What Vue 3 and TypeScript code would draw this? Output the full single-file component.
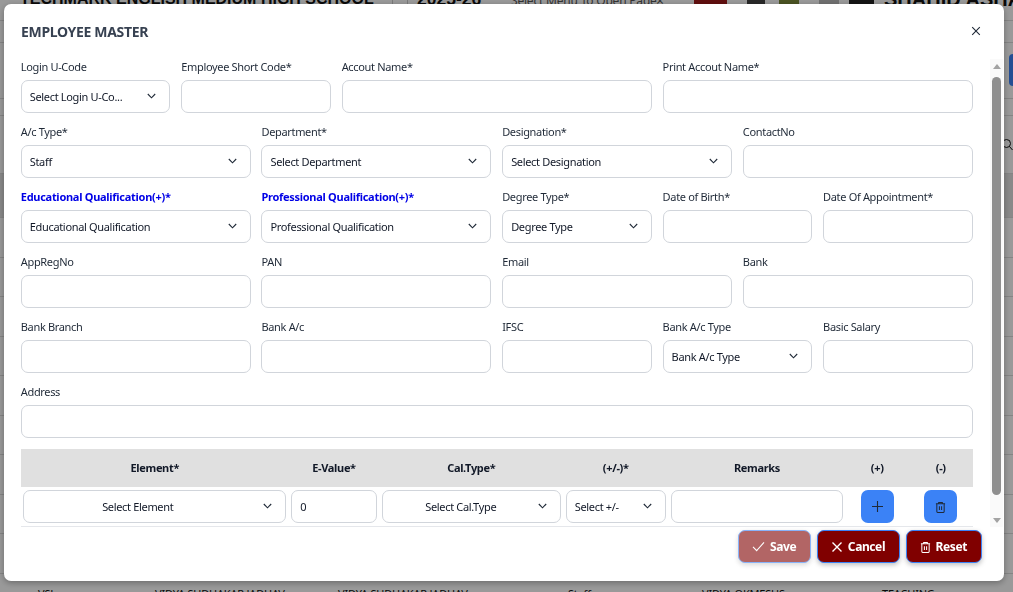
<script setup lang="ts">
interface Field {
  label: string;
  span: number;
  placeholder?: string;
  accent?: boolean;
}

const fields: Field[] = [
  { label: 'Login U-Code', span: 2, placeholder: 'Select Login U-Co...' },
  { label: 'Employee Short Code*', span: 2 },
  { label: 'Accout Name*', span: 4 },
  { label: 'Print Accout Name*', span: 4 },
  { label: 'A/c Type*', span: 3, placeholder: 'Staff' },
  { label: 'Department*', span: 3, placeholder: 'Select Department' },
  { label: 'Designation*', span: 3, placeholder: 'Select Designation' },
  { label: 'ContactNo', span: 3 },
  { label: 'Educational Qualification(+)*', span: 3, placeholder: 'Educational Qualification', accent: true },
  { label: 'Professional Qualification(+)*', span: 3, placeholder: 'Professional Qualification', accent: true },
  { label: 'Degree Type*', span: 2, placeholder: 'Degree Type' },
  { label: 'Date of Birth*', span: 2 },
  { label: 'Date Of Appointment*', span: 2 },
  { label: 'AppRegNo', span: 3 },
  { label: 'PAN', span: 3 },
  { label: 'Email', span: 3 },
  { label: 'Bank', span: 3 },
  { label: 'Bank Branch', span: 3 },
  { label: 'Bank A/c', span: 3 },
  { label: 'IFSC', span: 2 },
  { label: 'Bank A/c Type', span: 2, placeholder: 'Bank A/c Type' },
  { label: 'Basic Salary', span: 2 },
  { label: 'Address', span: 12 },
];

const columns = ['Element*', 'E-Value*', 'Cal.Type*', '(+/-)*', 'Remarks', '(+)', '(-)'];
const stripHeights = [10, 22, 56, 17, 58, 44, 39.5, 39.5, 39.5, 39.5, 39.5, 39.5, 39.5, 39.5, 39.5];
const lastRow = ['VSL', 'VIDYA SUDHAKAR JADHAV', 'VIDYA SUDHAKAR JADHAV', 'Staff', 'VIDYA OKMESUS', 'TEACHING'];
</script>

<template>
  <div class="page">
    <div class="topbar">
      <span class="school">TECHMARK ENGLISH MEDIUM HIGH SCHOOL</span>
      <span class="year">2025-26</span>
      <span class="menu">Select Menu To Open Page</span>
      <span class="menu-x">×</span>
      <span class="red-tile"></span>
      <span class="tool dark"></span>
      <span class="tool green"></span>
      <span class="tool grey"></span>
      <span class="tool black"></span>
      <span class="user">SHAHID ASHA(</span>
    </div>
    <div
      v-for="(h, i) in stripHeights"
      :key="i"
      class="strip"
      :class="{ band: i === 5 }"
      :style="{ height: h + 'px' }"
    >
      <span v-if="i === 2" class="side-button"></span>
      <svg v-if="i === 4" class="side-search" width="10" height="12" viewBox="0 0 10 12" fill="none" stroke="#111" stroke-width="1">
        <circle cx="3.5" cy="4.5" r="4" />
        <path d="M6.5 7.5 9.5 11" />
      </svg>
    </div>
    <div class="last-row">
      <span v-for="(cell, i) in lastRow" :key="i">{{ cell }}</span>
    </div>
  </div>

  <div class="overlay">
    <section class="modal">
      <header class="modal-head">
        <h2>EMPLOYEE MASTER</h2>
        <svg class="close" width="10" height="10" viewBox="0 0 10 10" fill="none" stroke="#1f2937" stroke-width="1.1">
          <path d="M1.2 1.2 8.8 8.8M8.8 1.2 1.2 8.8" />
        </svg>
      </header>

      <div class="modal-body">
        <div class="content">
          <div class="form-grid">
            <div v-for="f in fields" :key="f.label" class="field" :style="{ gridColumn: 'span ' + f.span }">
              <label :class="{ accent: f.accent }">{{ f.label }}</label>
              <div v-if="f.placeholder" class="control select">
                <span>{{ f.placeholder }}</span>
                <svg class="chev" width="9" height="6" viewBox="0 0 9 6" fill="none" stroke="#1f2937" stroke-width="1.1">
                  <path d="M.8 1 4.5 4.8 8.2 1" />
                </svg>
              </div>
              <input v-else class="control" type="text" />
            </div>
          </div>

          <table class="elements">
            <colgroup>
              <col style="width: 268px" />
              <col style="width: 90.5px" />
              <col style="width: 184px" />
              <col style="width: 105px" />
              <col style="width: 177.5px" />
              <col style="width: 63px" />
              <col style="width: 64px" />
            </colgroup>
            <thead>
              <tr>
                <th v-for="c in columns" :key="c">{{ c }}</th>
              </tr>
            </thead>
            <tbody>
              <tr>
                <td>
                  <div class="control select centered wide-gap">
                    <span>Select Element</span>
                    <svg class="chev" width="9" height="6" viewBox="0 0 9 6" fill="none" stroke="#1f2937" stroke-width="1.1">
                      <path d="M.8 1 4.5 4.8 8.2 1" />
                    </svg>
                  </div>
                </td>
                <td><input class="control" type="text" value="0" /></td>
                <td>
                  <div class="control select centered narrow-gap">
                    <span>Select Cal.Type</span>
                    <svg class="chev" width="9" height="6" viewBox="0 0 9 6" fill="none" stroke="#1f2937" stroke-width="1.1">
                      <path d="M.8 1 4.5 4.8 8.2 1" />
                    </svg>
                  </div>
                </td>
                <td>
                  <div class="control select">
                    <span>Select +/-</span>
                    <svg class="chev" width="9" height="6" viewBox="0 0 9 6" fill="none" stroke="#1f2937" stroke-width="1.1">
                      <path d="M.8 1 4.5 4.8 8.2 1" />
                    </svg>
                  </div>
                </td>
                <td><input class="control" type="text" /></td>
                <td>
                  <button class="icon-btn" type="button">
                    <svg width="13" height="13" viewBox="0 0 13 13" fill="none" stroke="#1f2937" stroke-width="1.1">
                      <path d="M6.5 1v11M1 6.5h11" />
                    </svg>
                  </button>
                </td>
                <td>
                  <button class="icon-btn" type="button">
                    <svg width="11" height="12" viewBox="0 0 12 13" fill="none" stroke="#1f2937" stroke-width="1.1">
                      <path d="M1 3h10M4 3V1.5h4V3M2 3v8.5a1 1 0 0 0 1 1h6a1 1 0 0 0 1-1V3M4.8 5.8v4M7.2 5.8v4" />
                    </svg>
                  </button>
                </td>
              </tr>
            </tbody>
          </table>
        </div>

        <div class="scrollbar">
          <span class="arrow up"></span>
          <span class="thumb"></span>
          <span class="arrow down"></span>
        </div>
      </div>

      <footer class="modal-foot">
        <button class="action disabled" type="button">
          <svg width="13" height="11" viewBox="0 0 14 12" fill="none" stroke="currentColor" stroke-width="1.2">
            <path d="M1 6.5 5 10.5 13 1.5" />
          </svg>
          Save
        </button>
        <button class="action" type="button">
          <svg width="12" height="12" viewBox="0 0 12 12" fill="none" stroke="currentColor" stroke-width="1.4">
            <path d="M1.5 1.5 10.5 10.5M10.5 1.5 1.5 10.5" />
          </svg>
          Cancel
        </button>
        <button class="action" type="button">
          <svg width="11" height="12" viewBox="0 0 12 13" fill="none" stroke="currentColor" stroke-width="1.1">
            <path d="M1 3h10M4 3V1.5h4V3M2 3v8.5a1 1 0 0 0 1 1h6a1 1 0 0 0 1-1V3M4.8 5.8v4M7.2 5.8v4" />
          </svg>
          Reset
        </button>
      </footer>
    </section>
  </div>
</template>

<style>
html,
body {
  margin: 0;
  height: 100%;
  overflow: hidden;
  background: #fff;
}
</style>

<style scoped>
.page {
  height: 592px;
  overflow: hidden;
  font-family: 'Noto Sans', sans-serif;
  color: #111;
}

.topbar {
  display: flex;
  align-items: flex-end;
  height: 22px;
  margin-top: -11px;
  padding-left: 20px;
  white-space: nowrap;
}

.topbar > * {
  flex-shrink: 0;
}

.school {
  width: 372px;
  font: bold 16px/24px 'Liberation Sans', sans-serif;
  border-right: 1px solid #ccc;
}

.year {
  margin-left: 14px;
  padding-left: 9px;
  width: 94px;
  border-left: 1px solid #ccc;
  font: bold 17.5px/24px 'Liberation Sans', sans-serif;
}

.menu {
  width: 138px;
  font-size: 12px;
  line-height: 20px;
  letter-spacing: -0.2px;
  color: #555;
}

.menu-x {
  width: 38px;
  margin-left: 7px;
  font-size: 14px;
  line-height: 20px;
  color: #555;
}

.red-tile {
  width: 33px;
  height: 22px;
  background: #a01818;
}

.tool {
  height: 20px;
}

.dark {
  width: 18px;
  margin-left: 20px;
  background: #444;
}

.green {
  width: 20px;
  margin-left: 14px;
  background: #7c8a3a;
}

.grey {
  width: 20px;
  margin-left: 20px;
  background: #bbb;
}

.black {
  width: 25px;
  margin-left: 10px;
  background: #222;
}

.user {
  margin-left: 10px;
  font: bold 20px/24px 'Liberation Sans', sans-serif;
}

.strip {
  box-sizing: border-box;
  border-bottom: 1px solid #ddd;
  display: flex;
  justify-content: flex-end;
  align-items: flex-end;
}

.strip.band {
  background: #e4e4e4;
}

.side-button {
  width: 4px;
  height: 32px;
  margin-bottom: 12px;
  background: #3b82f6;
  border-radius: 5px 0 0 5px;
}

.side-search {
  margin: 0 0 22px;
}

.last-row {
  display: grid;
  grid-template-columns: 117px 183px 230px 134px 180px 1fr;
  padding: 13px 0 0 38px;
  font-size: 11px;
  line-height: 14px;
  letter-spacing: -0.2px;
  white-space: nowrap;
}

.overlay {
  position: fixed;
  inset: 0;
  background: rgba(0, 0, 0, 0.4);
}

.modal {
  position: absolute;
  left: 4px;
  top: 4px;
  width: 1000px;
  height: 577px;
  display: flex;
  flex-direction: column;
  background: #fff;
  border-radius: 7px;
  box-shadow: 0 2px 6px rgba(0, 0, 0, 0.3);
  font-family: 'Noto Sans', sans-serif;
  font-size: 11px;
  letter-spacing: -0.33px;
  color: #1f2937;
}

.modal-head {
  height: 55px;
  padding: 0 23px 0 17px;
  display: flex;
  align-items: center;
  justify-content: space-between;
  flex-shrink: 0;
}

.modal-head h2 {
  margin: 0 0 1px;
  font-size: 14px;
  font-weight: 700;
  color: #374151;
}

.close {
  display: block;
  margin-bottom: 2px;
}

.modal-body {
  display: flex;
  height: 468px;
  overflow: hidden;
}

.content {
  width: 952px;
  margin-left: 16.75px;
  flex-shrink: 0;
}

.form-grid {
  display: grid;
  grid-template-columns: repeat(12, 1fr);
  column-gap: 10.8px;
  row-gap: 11px;
}

.field {
  display: flex;
  flex-direction: column;
  min-width: 0;
}

.field label {
  height: 16px;
  line-height: 16px;
  margin-bottom: 5px;
  white-space: nowrap;
  color: #1f2937;
}

.field label.accent {
  color: #0000e6;
  font-weight: 700;
  letter-spacing: -0.28px;
}

.control {
  box-sizing: border-box;
  width: 100%;
  height: 33px;
  border: 1px solid #d1d5db;
  border-radius: 7px;
  background: #fff;
  padding: 0 8px;
  font: inherit;
  letter-spacing: inherit;
  color: #111827;
  outline: none;
  display: block;
}

.select {
  display: flex;
  align-items: center;
  justify-content: space-between;
  white-space: nowrap;
}

.select .chev {
  flex-shrink: 0;
  margin: 0 5px 1px 0;
}

.select.centered span {
  flex: 1;
  text-align: center;
}

.select.wide-gap span {
  padding-right: 20px;
}

.select.narrow-gap span {
  padding-right: 7px;
}

.elements {
  margin-top: 11px;
  width: 952px;
  table-layout: fixed;
  border-collapse: collapse;
}

.elements th {
  height: 36px;
  padding: 0 0 2px;
  background: #e0e0e0;
  font-weight: 700;
  color: #111827;
  text-align: center;
}

.elements td {
  padding: 3px 2.5px;
  text-align: center;
  border-bottom: 1px solid #e5e7eb;
}

.elements .control {
  text-align: left;
}

.icon-btn {
  width: 33px;
  height: 33px;
  padding: 0;
  border: none;
  border-radius: 7px;
  background: #3b82f6;
  display: inline-flex;
  align-items: center;
  justify-content: center;
  vertical-align: top;
}

.scrollbar {
  width: 13px;
  margin-left: 17.25px;
  flex-shrink: 0;
  background: #fafafa;
  display: flex;
  flex-direction: column;
  align-items: center;
}

.arrow {
  width: 0;
  height: 0;
  border-left: 4.5px solid transparent;
  border-right: 4.5px solid transparent;
}

.arrow.up {
  margin: 5px 0 8px;
  border-bottom: 5px solid #a3a3a3;
}

.thumb {
  width: 9px;
  height: 418px;
  border-radius: 5px;
  background: #8f8f8f;
}

.arrow.down {
  margin-top: 23px;
  border-top: 5px solid #a3a3a3;
}

.modal-foot {
  display: flex;
  justify-content: flex-end;
  gap: 5.5px;
  padding: 3px 22px 0 0;
}

.action {
  height: 33px;
  padding: 0 14px 0 13px;
  display: inline-flex;
  align-items: center;
  gap: 5px;
  border: 1px solid #3b82f6;
  border-radius: 7px;
  background: #800000;
  color: #fff;
  font: 700 12px 'Noto Sans', sans-serif;
  letter-spacing: -0.4px;
  box-shadow: 0 2px 5px rgba(0, 0, 0, 0.25);
}

.action.disabled {
  opacity: 0.6;
}
</style>
